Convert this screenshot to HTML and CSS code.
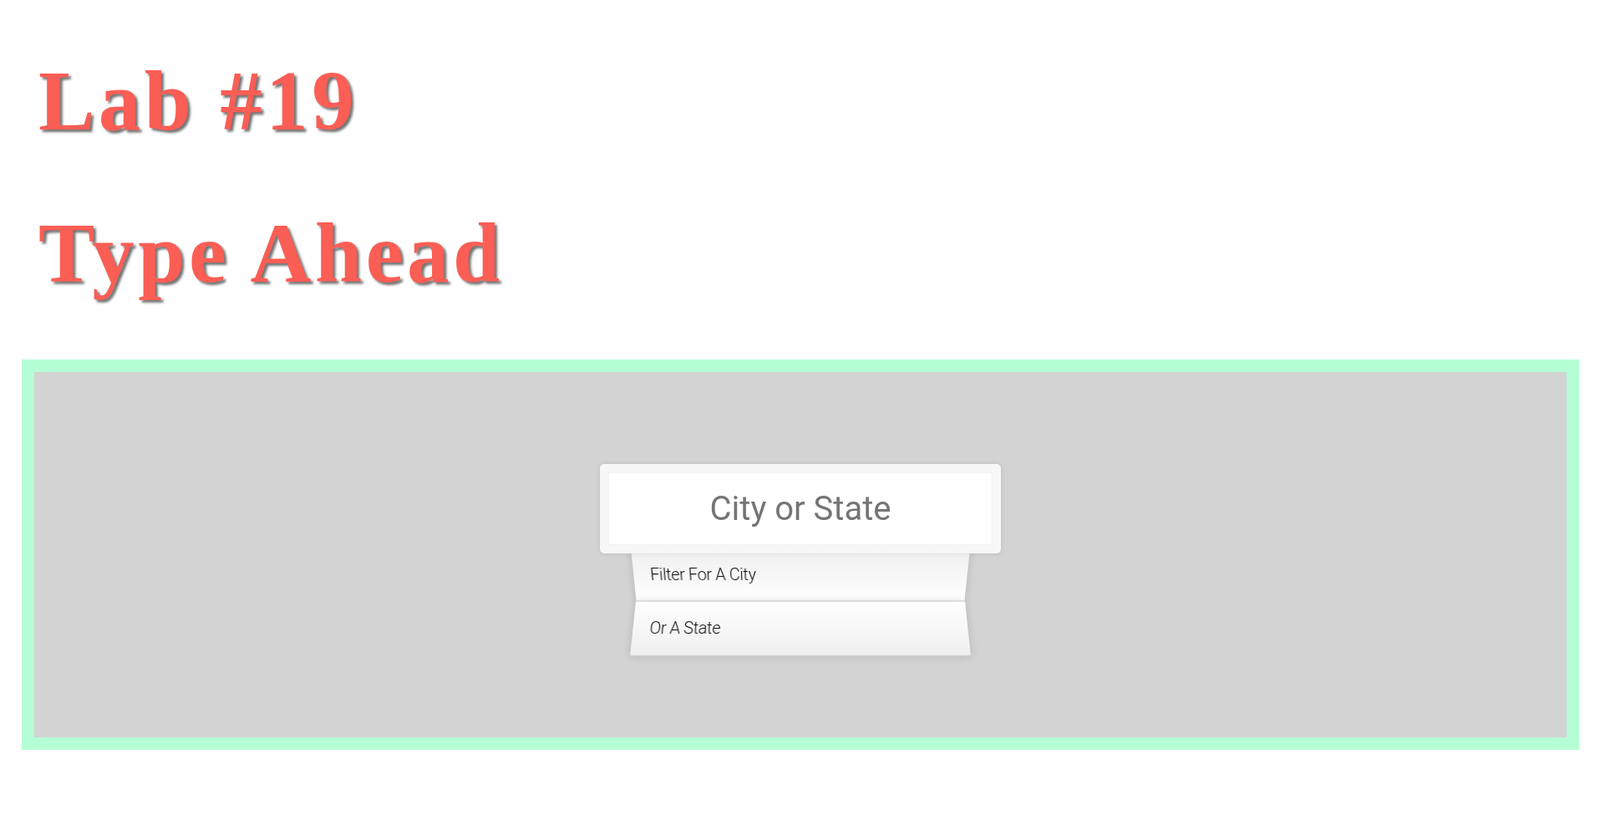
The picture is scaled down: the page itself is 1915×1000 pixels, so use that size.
FILE: index.html
```html
<!DOCTYPE html>
<html lang="en">
<head>
<meta charset="utf-8">
<title>Type Ahead</title>
<link rel="stylesheet" href="styles.css">
</head>
<body>
  <h1 class="title">Lab #19</h1>
  <h1 class="title">Type Ahead</h1>
  <div class="frame">
    <div class="stage">
      <form class="search-form">
        <input type="text" class="search" placeholder="City or State">
        <ul class="suggestions">
          <li>Filter for a city</li>
          <li>or a state</li>
        </ul>
      </form>
    </div>
  </div>
</body>
</html>
```

FILE: styles.css
```css
html {
  box-sizing: border-box;
}
*, *::before, *::after {
  box-sizing: inherit;
}
body {
  margin: 0;
  padding: 0 25px 0 26px;
  background: #ffffff;
  font-family: "Liberation Serif", serif;
}
.title {
  margin: 64px 0 67px 20px;
  font-family: "Liberation Serif", serif;
  font-weight: 700;
  font-size: 101px;
  line-height: 115px;
  letter-spacing: 4.5px;
  color: #fa5e55;
  text-shadow: 3px 3px 3px rgba(0, 0, 0, 0.55);
}
.title + .title {
  margin-top: 0;
  margin-bottom: 69px;
}
.frame {
  border: 15px solid #b5fed5;
  background: #d3d3d3;
}
.stage {
  padding: 50px;
}
.search-form {
  max-width: 400px;
  margin: 50px auto;
  font-family: "Roboto", "Liberation Sans", sans-serif;
  font-size: 20px;
  font-weight: 300;
}
input.search {
  display: block;
  margin: 0;
  padding: 20px;
  text-align: center;
  outline: 0;
  border: 10px solid #f7f7f7;
  width: 120%;
  left: -10%;
  position: relative;
  top: 10px;
  z-index: 2;
  border-radius: 5px;
  font-family: "Roboto", "Liberation Sans", sans-serif;
  font-size: 40px;
  line-height: 47px;
  height: 107px;
  color: #333;
  background: #ffffff;
  box-shadow: 0 0 5px rgba(0, 0, 0, 0.12), inset 0 0 2px rgba(0, 0, 0, 0.19);
}
input.search::placeholder {
  color: #757575;
}
.suggestions {
  margin: 0;
  padding: 0;
  position: relative;
}
.suggestions li {
  background: white;
  list-style: none;
  border-bottom: 1px solid #d8d8d8;
  box-shadow: 0 0 10px rgba(0, 0, 0, 0.14);
  margin: 0;
  padding: 20px;
  line-height: 24px;
  letter-spacing: -0.4px;
  display: flex;
  justify-content: space-between;
  text-transform: capitalize;
  color: #111;
}
.suggestions li:nth-child(even) {
  transform: perspective(100px) rotateX(3deg) translateY(2px) scale(1.001);
  background: linear-gradient(to bottom, #ffffff 0%, #efefef 100%);
}
.suggestions li:nth-child(odd) {
  transform: perspective(100px) rotateX(-3deg) translateY(3px);
  background: linear-gradient(to top, #ffffff 0%, #efefef 100%);
}
```
